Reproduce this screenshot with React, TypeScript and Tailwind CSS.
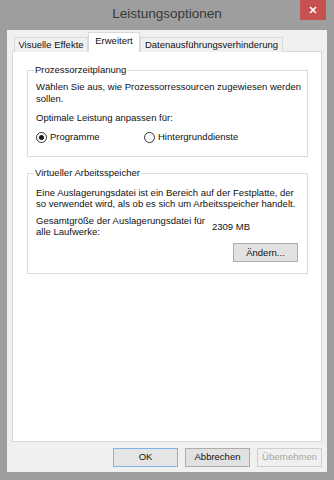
import React from 'react';

const font = { fontFamily: '"Liberation Sans", Arial, sans-serif' };

function Radio({ checked, label }: { checked?: boolean; label: string }) {
  return (
    <div className="flex items-center gap-[3px]">
      <span className="flex h-[11px] w-[11px] items-center justify-center rounded-full border border-[#333] bg-white">
        {checked && <span className="h-[5px] w-[5px] rounded-full bg-[#1a1a1a]" />}
      </span>
      <span>{label}</span>
    </div>
  );
}

function GroupBox({ title, className, children }: { title: string; className?: string; children: React.ReactNode }) {
  return (
    <div className={'relative ml-[14px] mr-[13px] border border-[#dcdcdc] ' + (className ?? '')}>
      <span className="absolute left-[6px] top-[-7px] bg-white px-[1px] leading-[12px]">{title}</span>
      {children}
    </div>
  );
}

function Button({ label, primary, disabled }: { label: string; primary?: boolean; disabled?: boolean }) {
  let cls = 'border-[#adadad] bg-[#e1e1e1] text-[#111]';
  if (primary) cls = 'border-[#7eb4ea] bg-[#e5e5e5] text-[#111]';
  if (disabled) cls = 'border-[#cfcfcf] bg-[#f0f0f0] text-[#a5a5a5]';
  return (
    <button type="button" className={'flex h-[19px] w-[65px] items-center justify-center border ' + cls}>
      {label}
    </button>
  );
}

export default function App() {
  return (
    <div className="flex h-[480px] w-[334px] flex-col bg-[#9e9e9e] text-[9.5px] text-[#111]" style={font}>
      <div className="relative flex h-[30px] shrink-0 items-start justify-center">
        <span className="mt-[4px] text-[13.5px] text-[#383838]">Leistungsoptionen</span>
        <div className="absolute right-[8px] top-0 flex h-[20px] w-[26px] items-center justify-center bg-[#c75050]">
          <svg width="8" height="8" viewBox="0 0 8 8">
            <path d="M1 1 L7 7 M7 1 L1 7" stroke="white" strokeWidth="1.6" />
          </svg>
        </div>
      </div>

      <div className="mx-[7px] mb-[8px] flex flex-1 flex-col bg-[#f0f0f0] px-[5px] pt-[2px]">
        <div className="relative z-10 -mb-px flex h-[20px] items-end pl-[2px]">
          <div className="flex h-[15px] w-[74px] items-center justify-center border border-b-0 border-[#d9d9d9] bg-[#f0f0f0] pt-[1px]">
            Visuelle Effekte
          </div>
          <div className="flex h-[20px] w-[52px] items-center justify-center border border-b-0 border-[#d9d9d9] bg-white pb-[2px]">
            Erweitert
          </div>
          <div className="flex h-[15px] w-[143px] items-center justify-center border border-b-0 border-[#d9d9d9] bg-[#f0f0f0] pt-[1px]">
            Datenausführungsverhinderung
          </div>
        </div>

        <div className="flex h-[391px] flex-col border border-[#d9d9d9] bg-white pt-[18px]">
          <GroupBox title="Prozessorzeitplanung" className="h-[87px]">
            <div className="pl-[8px] pr-[2px] pt-[10px] leading-[12px]">
              <p>Wählen Sie aus, wie Prozessorressourcen zugewiesen werden sollen.</p>
              <p className="mt-[7px]">Optimale Leistung anpassen für:</p>
              <div className="mt-[7px] flex">
                <div className="w-[108px]">
                  <Radio checked label="Programme" />
                </div>
                <Radio label="Hintergrunddienste" />
              </div>
            </div>
          </GroupBox>

          <GroupBox title="Virtueller Arbeitsspeicher" className="mt-[16px] h-[101px]">
            <div className="pl-[8px] pr-[2px] pt-[13px] leading-[11px]">
              <p>Eine Auslagerungsdatei ist ein Bereich auf der Festplatte, der so verwendet wird, als ob es sich um Arbeitsspeicher handelt.</p>
              <div className="mt-[6px] flex items-center">
                <p className="w-[176px]">Gesamtgröße der Auslagerungsdatei für alle Laufwerke:</p>
                <span>2309 MB</span>
              </div>
              <div className="mt-[6px] flex justify-end pr-[7px]">
                <Button label="Ändern..." />
              </div>
            </div>
          </GroupBox>
        </div>

        <div className="mt-[6px] flex justify-end gap-[7px]">
          <Button label="OK" primary />
          <Button label="Abbrechen" />
          <Button label="Übernehmen" disabled />
        </div>
      </div>
    </div>
  );
}
